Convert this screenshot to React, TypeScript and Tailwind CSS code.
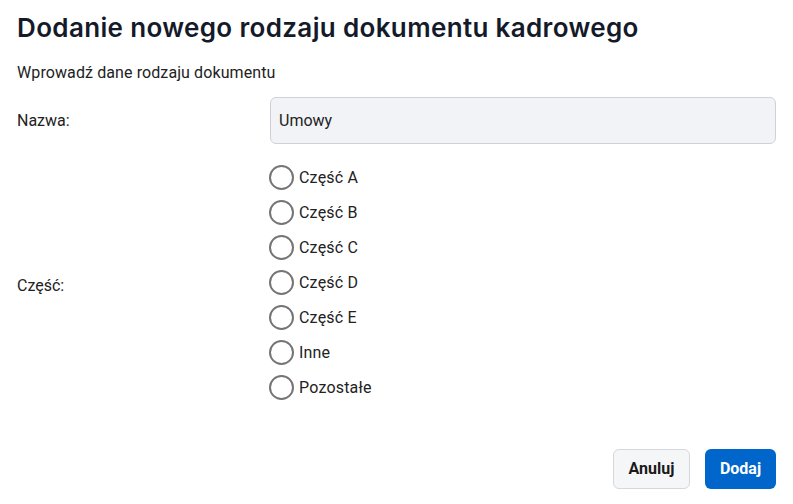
import React from "react";

const options = ["Część A", "Część B", "Część C", "Część D", "Część E", "Inne", "Pozostałe"];

export default function App() {
  return (
    <div
      className="w-[793px] h-[504px] bg-white px-[17px] text-[#222]"
      style={{ fontFamily: "Roboto, 'Liberation Sans', sans-serif" }}
    >
      <h1
        className="pt-[10px] h-[46px] text-[26px] leading-[36px] font-semibold text-[#141a2a] tracking-[0.35px]"
        style={{ fontFamily: "Inter, 'Open Sans', sans-serif" }}
      >
        Dodanie nowego rodzaju dokumentu kadrowego
      </h1>
      <p className="mt-[17px] text-[16px] leading-[20px] text-[#222] tracking-[0.1px]">Wprowadź dane rodzaju dokumentu</p>
      <div className="mt-[14px] grid grid-cols-[253px_1fr]">
        <div className="flex items-center text-[16px] text-[#222]">Nazwa:</div>
        <div className="h-[47px] rounded-[6px] border border-[#cfd1d6] bg-[#f2f3f7] flex items-center pl-[8px] text-[16px] text-[#222]">
          Umowy
        </div>
        <div className="flex items-center text-[16px] text-[#222] mt-[16px] pt-[6px]">Część:</div>
        <div className="mt-[16px] flex flex-col">
          {options.map((o) => (
            <label key={o} className="h-[35px] flex items-center">
              <span className="w-[25px] h-[25px] -ml-px rounded-full border-2 border-[#757575] bg-white shrink-0" />
              <span className="ml-[5px] text-[16px] text-[#222] tracking-[0.2px]">{o}</span>
            </label>
          ))}
        </div>
      </div>
      <div className="mt-[44px] flex justify-end gap-[15px]">
        <button className="h-[40px] w-[77px] rounded-[6px] border border-[#d4d7dc] bg-[#f5f6f8] text-[16px] font-bold text-[#1a1a1a]">
          Anuluj
        </button>
        <button className="h-[40px] w-[71px] rounded-[6px] bg-[#0066cc] text-[16px] font-bold text-white">
          Dodaj
        </button>
      </div>
    </div>
  );
}
